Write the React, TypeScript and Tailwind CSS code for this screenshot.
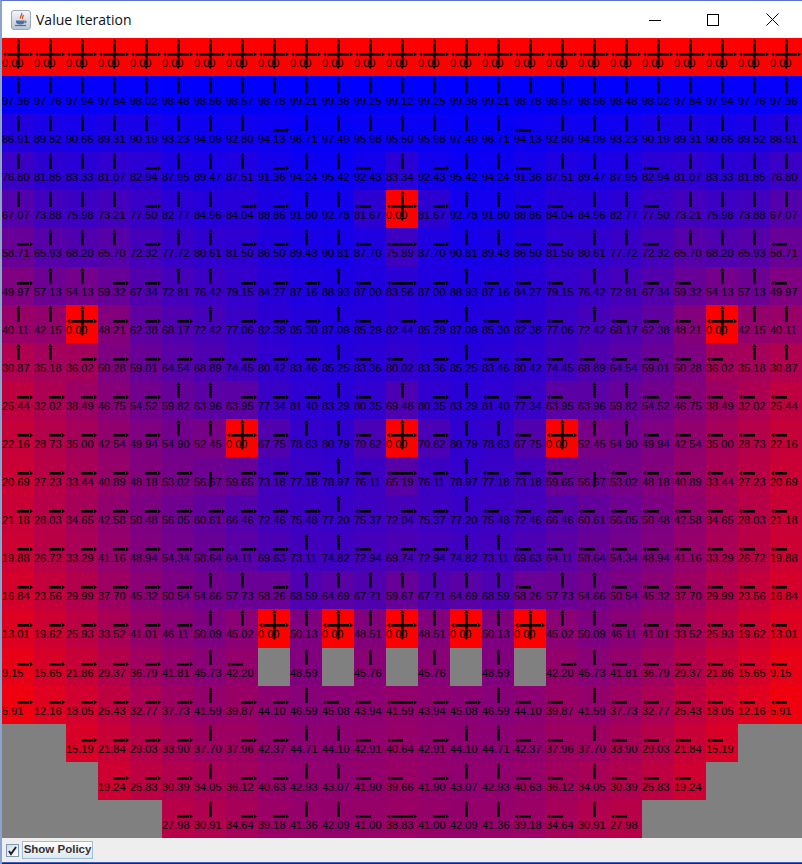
import React from 'react';

// left half + centre column only, the grid is mirrored around column 12
const VALUES: string[] = [
  '0.00 0.00 0.00 0.00 0.00 0.00 0.00 0.00 0.00 0.00 0.00 0.00 0.00',
  '97.36 97.76 97.94 97.84 98.02 98.48 98.66 98.57 98.78 99.21 99.38 99.25 99.12',
  '86.91 89.82 90.66 89.31 90.19 93.23 94.09 92.80 94.13 96.71 97.49 95.98 95.50',
  '76.80 81.85 83.33 81.07 82.94 87.95 89.47 87.51 91.36 94.24 95.42 92.43 83.34',
  '67.07 73.88 75.98 73.21 77.50 82.77 84.96 84.04 88.86 91.80 92.78 81.67 0.00',
  '58.71 65.93 68.20 65.70 72.32 77.72 80.61 81.50 86.50 89.43 90.81 87.70 75.89',
  '49.97 57.13 54.13 59.32 67.34 72.81 76.42 79.15 84.27 87.16 88.93 87.00 83.56',
  '40.11 42.15 0.00 48.21 62.38 68.17 72.42 77.06 82.38 85.30 87.09 85.29 82.44',
  '30.87 35.18 36.02 50.28 59.01 64.54 68.89 74.45 80.42 83.46 85.25 83.36 80.02',
  '25.44 32.02 38.49 46.75 54.52 59.82 63.96 63.95 77.34 81.40 83.29 80.35 69.48',
  '22.16 28.73 35.00 42.54 49.94 54.90 52.45 0.00 67.75 78.63 80.79 70.62 0.00',
  '20.69 27.23 33.44 40.89 48.18 53.02 56.67 59.65 73.18 77.18 78.97 76.11 65.19',
  '21.18 28.03 34.65 42.58 50.48 56.05 60.61 66.46 72.46 75.48 77.20 75.37 72.04',
  '19.88 26.72 33.29 41.16 48.94 54.34 58.64 64.11 69.63 73.11 74.82 72.94 69.74',
  '16.84 23.56 29.99 37.70 45.32 50.54 54.66 57.73 58.26 68.59 64.69 67.71 59.67',
  '13.01 19.62 25.93 33.52 41.01 46.11 50.09 45.02 0.00 50.13 0.00 48.51 0.00',
  '9.15 15.65 21.86 29.37 36.79 41.81 45.73 42.20 x 48.59 x 45.76 x',
  '5.91 12.16 18.05 25.43 32.77 37.73 41.59 39.87 44.10 46.59 45.08 43.94 41.59',
  'x x 15.19 21.84 29.03 33.90 37.70 37.96 42.37 44.71 44.10 42.91 40.64',
  'x x x 19.24 25.83 30.39 34.05 36.12 40.63 42.93 43.07 41.90 39.66',
  'x x x x x 27.98 30.91 34.64 39.18 41.36 42.09 41.00 38.83',
];

const POLICY: string[] = [
  'udlr udlr udlr udlr udlr udlr udlr udlr udlr udlr udlr udlr udlr',
  'u u u u u u u u u u u u u',
  'u u u u u u u u r u u u u',
  'u u u u r u u u r u u l u',
  'u u u u r u u r r u u l udlr',
  'r u u u r u u r r u u l lr',
  'r u u r r u u r r r u l lr',
  'u u udlr r r r u r r r u l r',
  'u u r r r r r r r r u l l',
  'r r r r r u u r r r u l u',
  'r r r r r u u udlr r u u l udlr',
  'r r r r r r d r r r u l lr',
  'r r r r r r r r r r u l r',
  'r r r r r r r r r u u l r',
  'r r r r r r u u r u u u u',
  'r r r r r r u u udlr u udlr u udlr',
  'r r r r r r u l - u - u -',
  'r r r r r r u r r u l l lr',
  '- - r r r r u r r u u l l',
  '- - - r r r u r r u u l l',
  '- - - - - r u r r u u l lr',
];

const MAX_VALUE = 99.38;

function mirrorDir(dir: string) {
  return dir.replace(/[lr]/g, (c) => (c === 'l' ? 'r' : 'l'));
}

function cellColor(value: string) {
  if (value === 'x') return 'rgb(128,128,128)';
  const t = parseFloat(value) / MAX_VALUE;
  return `rgb(${Math.round(255 * (1 - t))},0,${Math.round(255 * t)})`;
}

function PolicyArrows({ dir }: { dir: string }) {
  return (
    <svg className="absolute left-0 top-0" width="32" height="38" viewBox="0 0 32 38" fill="#000">
      {dir.includes('u') && (
        <>
          <rect x="15" y="5" width="2.6" height="12" />
          <polygon points="16.3,1 18.5,4.2 14.1,4.2" />
        </>
      )}
      {dir.includes('d') && (
        <>
          <rect x="15" y="15" width="2.6" height="12" />
          <polygon points="16.3,31 18.5,27.8 14.1,27.8" />
        </>
      )}
      {dir.includes('l') && (
        <>
          <rect x="5" y="15" width="12" height="2.6" />
          <polygon points="1,16.3 4.2,14.1 4.2,18.5" />
        </>
      )}
      {dir.includes('r') && (
        <>
          <rect x="15" y="15" width="12" height="2.6" />
          <polygon points="31,16.3 27.8,14.1 27.8,18.5" />
        </>
      )}
    </svg>
  );
}

function Cell({ value, dir }: { value: string; dir: string }) {
  return (
    <div className="relative pt-[19px] text-[11px] leading-[13px] whitespace-nowrap text-black" style={{ backgroundColor: cellColor(value) }}>
      {value !== 'x' && <span>{value}</span>}
      {dir !== '-' && <PolicyArrows dir={dir} />}
    </div>
  );
}

function JavaIcon() {
  return (
    <div className="flex h-[20px] w-[20px] items-center justify-center rounded-[3px] border border-[#9aa9b6] bg-linear-to-b from-[#f4f6f9] to-[#b7c6d5]">
      <svg width="16" height="16" viewBox="0 0 16 16" fill="none">
        <path d="M8.5 1C10 3 6.5 4 7.5 6.5M10.5 3C10 4.5 9 5 9.5 7" stroke="#d9541e" strokeWidth="1.3" />
        <path d="M3 8.5h8.5v1.5c0 1.5-1.5 2.5-4.2 2.5S3 11.5 3 10z" fill="#4d6f9e" />
        <path d="M11.5 9h1.5v1.6h-1.5" stroke="#4d6f9e" />
        <path d="M2 13.5h11" stroke="#4d6f9e" strokeWidth="1.2" />
      </svg>
    </div>
  );
}

export default function App() {
  const cells: { value: string; dir: string }[] = [];
  VALUES.forEach((row, r) => {
    const vals = row.split(' ');
    const dirs = POLICY[r].split(' ');
    for (let c = 0; c < 25; c++) {
      const i = c <= 12 ? c : 24 - c;
      cells.push({ value: vals[i], dir: c <= 12 ? dirs[i] : mirrorDir(dirs[i]) });
    }
  });

  return (
    <div className="flex h-[864px] w-[802px] flex-col overflow-hidden border-l-2 border-t border-l-[#8ea3c9] border-t-[#5b74cf] bg-white font-['Liberation_Sans',sans-serif]">
      <div className="flex h-[37px] shrink-0 items-center bg-white">
        <div className="ml-[9px]">
          <JavaIcon />
        </div>
        <span className="ml-[5px] font-['Open_Sans',sans-serif] text-[14px] text-[#111]">Value Iteration</span>
        <div className="ml-auto flex items-center">
          <svg width="12" height="12" viewBox="0 0 12 12" className="mr-[46px]" shapeRendering="crispEdges">
            <path d="M0 6h12v1H0z" fill="#000" />
          </svg>
          <svg width="12" height="12" viewBox="0 0 12 12" className="mr-[47px]" shapeRendering="crispEdges">
            <path d="M.5.5h11v11H.5z" fill="none" stroke="#000" />
          </svg>
          <svg width="13" height="13" viewBox="0 0 13 13" className="mr-[23px]">
            <path d="M.5.5l12 12M12.5.5l-12 12" fill="none" stroke="#000" />
          </svg>
        </div>
      </div>
      <div className="grid h-[800px] shrink-0 grid-cols-[repeat(25,32px)] grid-rows-[repeat(21,1fr)]">
        {cells.map((cell, i) => (
          <Cell key={i} value={cell.value} dir={cell.dir} />
        ))}
      </div>
      <div className="flex h-[24px] shrink-0 items-center bg-[#eeeeee] pl-[4px]">
        <div className="flex h-[13px] w-[13px] items-center justify-center border border-[#7f9ab5] bg-linear-to-br from-[#cfdcea] to-[#ffffff]">
          <svg width="11" height="11" viewBox="0 0 11 11">
            <path d="M2 6l2 3 5-7" fill="none" stroke="#222" strokeWidth="2" />
          </svg>
        </div>
        <div className="ml-[3px] flex h-[18px] w-[71px] items-center justify-center border border-[#a3bdd6] bg-linear-to-b from-[#ffffff] to-[#dde8f3] text-[11.5px] font-bold text-[#333]">
          Show Policy
        </div>
      </div>
      <div className="h-px shrink-0 bg-[#3f5fc0]" />
      <div className="h-px shrink-0 bg-[#1c2a3a]" />
    </div>
  );
}
